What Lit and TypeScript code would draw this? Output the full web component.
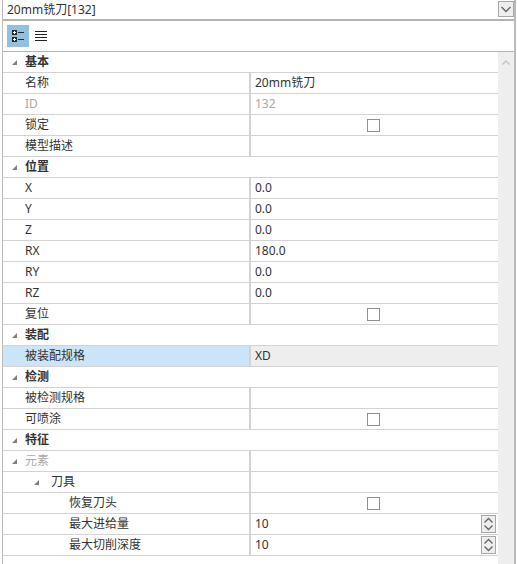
import { LitElement, html, css, svg } from 'lit';
import { customElement } from 'lit/decorators.js';

type Row = {
  label: string;
  value?: string;
  indent?: number;
  group?: boolean;
  arrow?: boolean;
  muted?: boolean;
  check?: boolean;
  spin?: boolean;
  selected?: boolean;
};

const rows: Row[] = [
  { label: '基本', group: true, arrow: true },
  { label: '名称', value: '20mm铣刀' },
  { label: 'ID', value: '132', muted: true },
  { label: '锁定', check: true },
  { label: '模型描述' },
  { label: '位置', group: true, arrow: true },
  { label: 'X', value: '0.0' },
  { label: 'Y', value: '0.0' },
  { label: 'Z', value: '0.0' },
  { label: 'RX', value: '180.0' },
  { label: 'RY', value: '0.0' },
  { label: 'RZ', value: '0.0' },
  { label: '复位', check: true },
  { label: '装配', group: true, arrow: true },
  { label: '被装配规格', value: 'XD', selected: true },
  { label: '检测', group: true, arrow: true },
  { label: '被检测规格' },
  { label: '可喷涂', check: true },
  { label: '特征', group: true, arrow: true },
  { label: '元素', arrow: true, muted: true },
  { label: '刀具', arrow: true, indent: 1 },
  { label: '恢复刀头', indent: 2, check: true },
  { label: '最大进给量', value: '10', indent: 2, spin: true },
  { label: '最大切削深度', value: '10', indent: 2, spin: true },
];

const chevron = (d: string, stroke: string) =>
  svg`<path d=${d} fill="none" stroke=${stroke} stroke-width="1.4"/>`;

@customElement('app-root')
export class AppRoot extends LitElement {
  static styles = css`
    :host {
      display: block;
      width: 517px;
      height: 564px;
      overflow: hidden;
      background: #fff;
      color: #333;
      font-family: 'Noto Sans', 'Noto Sans CJK SC', sans-serif;
      font-size: 12px;
    }

    .panel {
      height: 564px;
      margin-left: 2px;
      margin-right: 1px;
      border-left: 1px solid #bbb;
      border-right: 2px solid #bbb;
      box-sizing: border-box;
      overflow: hidden;
    }

    .title {
      height: 21px;
      box-sizing: border-box;
      border-bottom: 2px solid #b4b4b4;
      display: flex;
      justify-content: space-between;
      padding: 1px 0 0 4px;
      line-height: 17px;
    }

    .combo-btn {
      width: 16px;
      height: 16px;
      box-sizing: border-box;
      border: 1px solid #a8a8a8;
      background: #eee;
      display: flex;
    }

    .toolbar {
      height: 31px;
      box-sizing: border-box;
      border-bottom: 1px solid #b4b4b4;
      display: flex;
      align-items: center;
      padding: 0 4px;
    }

    .tool {
      width: 22px;
      height: 22px;
      display: flex;
      align-items: center;
      justify-content: center;
    }

    .tool.on {
      background: #91c0e1;
    }

    .body {
      display: flex;
    }

    .grid {
      flex: 1;
      min-width: 0;
    }

    .scroll {
      width: 16px;
      flex: none;
      height: 512px;
      background: #eee;
      display: flex;
      justify-content: center;
      padding-top: 7px;
      box-sizing: border-box;
    }

    .row {
      height: 21px;
      box-sizing: border-box;
      border-bottom: 1px solid #d3d3d3;
      display: grid;
      grid-template-columns: 246px 1fr;
      line-height: 20px;
    }

    .label {
      display: flex;
      align-items: center;
      box-sizing: border-box;
      white-space: nowrap;
    }

    .tri {
      width: 22px;
      flex: none;
      display: flex;
      padding-left: 8px;
      box-sizing: border-box;
    }

    .indent-1 .tri {
      margin-left: 22px;
      width: 26px;
    }

    .indent-2 {
      padding-left: 66px;
    }

    .plain {
      padding-left: 22px;
    }

    .value {
      border-left: 2px solid #d3d3d3;
      padding-left: 4px;
      display: flex;
      align-items: center;
      justify-content: space-between;
      min-width: 0;
    }

    .group .label {
      font-weight: 700;
    }

    .group .value {
      border-left-color: transparent;
    }

    .muted {
      color: #a9a9a9;
    }

    .selected .label {
      background: #cce4f7;
    }

    .selected .value {
      background: #eee;
    }

    .check {
      width: 13px;
      height: 13px;
      box-sizing: border-box;
      border: 1px solid #8f8f8f;
      background: #fff;
      margin: 0 auto;
      position: relative;
      left: -3px;
    }

    .spin {
      width: 15px;
      height: 18px;
      box-sizing: border-box;
      border: 1px solid #a8a8a8;
      background: #eee;
      margin-right: 2px;
      display: flex;
    }
  `;

  private renderRow(r: Row) {
    const cls = ['row', r.group ? 'group' : '', r.selected ? 'selected' : ''].join(' ');
    const labelCls = [
      'label',
      r.indent === 1 ? 'indent-1' : '',
      r.indent === 2 ? 'indent-2' : '',
      !r.arrow && !r.indent ? 'plain' : '',
      r.muted ? 'muted' : '',
    ].join(' ');
    return html`
      <div class=${cls}>
        <div class=${labelCls}>
          ${r.arrow
            ? html`<span class="tri">
                <svg width="7" height="7" viewBox="0 0 7 7"><path d="M6 1V6H1Z" fill="#808080"/></svg>
              </span>`
            : ''}
          <span>${r.label}</span>
        </div>
        <div class="value ${r.muted ? 'muted' : ''}">
          ${r.value ? html`<span>${r.value}</span>` : ''}
          ${r.check ? html`<span class="check"></span>` : ''}
          ${r.spin
            ? html`<span class="spin">
                <svg width="13" height="16" viewBox="0 0 13 16">
                  ${chevron('M2.5 6.5L6.5 2.5L10.5 6.5', '#666')}
                  ${chevron('M2.5 9.5L6.5 13.5L10.5 9.5', '#666')}
                </svg>
              </span>`
            : ''}
        </div>
      </div>
    `;
  }

  render() {
    return html`
      <div class="panel">
        <div class="title">
          <span>20mm铣刀[132]</span>
          <span class="combo-btn">
            <svg width="14" height="14" viewBox="0 0 14 14">${chevron('M2.5 5L7 9.5L11.5 5', '#666')}</svg>
          </span>
        </div>
        <div class="toolbar">
          <span class="tool on">
            <svg width="14" height="14" viewBox="0 0 14 14">
              <rect x="1" y="1" width="5" height="5" fill="#2a2a2a"/>
              <rect x="1" y="8" width="5" height="5" fill="#2a2a2a"/>
              <path d="M2 3.5H5M3.5 2V5M2 10.5H5M3.5 9V12" stroke="#fff" stroke-width="1"/>
              <path d="M7 3.5H13M7 10.5H13" stroke="#2a2a2a"/>
            </svg>
          </span>
          <span class="tool">
            <svg width="14" height="14" viewBox="0 0 14 14">
              <path d="M2 2.5H14M2 5.5H14M2 8.5H14M2 11.5H14" stroke="#222"/>
            </svg>
          </span>
        </div>
        <div class="body">
          <div class="grid">${rows.map((r) => this.renderRow(r))}</div>
          <div class="scroll">
            <svg width="10" height="7" viewBox="0 0 10 7">${chevron('M1.5 5.5L5 2L8.5 5.5', '#c4c4c4')}</svg>
          </div>
        </div>
      </div>
    `;
  }
}
